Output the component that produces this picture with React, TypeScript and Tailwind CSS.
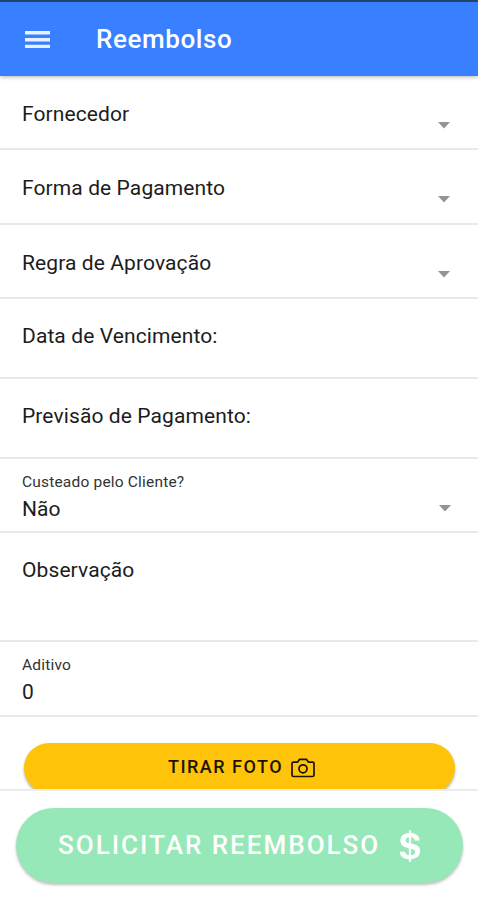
import React from "react";
import { IoLogoUsd } from "react-icons/io5";

interface FieldProps {
  label: string;
  value?: string;
  select?: boolean;
  className: string;
}

function Caret({ className }: { className: string }) {
  return (
    <svg viewBox="0 0 12 7" className={`h-[7px] w-3 fill-[#949494] ${className}`}>
      <path d="M0 0h12L6 6.6z" />
    </svg>
  );
}

function CameraIcon({ className }: { className: string }) {
  return (
    <svg viewBox="0 0 24 20" fill="none" stroke="currentColor" strokeWidth="1.7" strokeLinejoin="round" className={className}>
      <path d="M2.4 4.2h4.1l2.1-2.9h6.8l2.1 2.9h4.1a1.4 1.4 0 0 1 1.4 1.4v11.5a1.4 1.4 0 0 1-1.4 1.4H2.4A1.4 1.4 0 0 1 1 17.1V5.6a1.4 1.4 0 0 1 1.4-1.4z" />
      <circle cx="12" cy="10.8" r="4" />
    </svg>
  );
}

function Field({ label, value, select, className }: FieldProps) {
  return (
    <div className={`flex items-start justify-between border-b-2 border-[#e9e9e9] pl-[22px] ${className}`}>
      {value ? (
        <div className="pt-3.5">
          <div className="text-[15.5px] leading-[18px] tracking-[0.19px] text-[#333333]">{label}</div>
          <div className="mt-1.5 text-[21px] leading-6">{value}</div>
        </div>
      ) : (
        <div className="text-[21px] leading-6 tracking-[0.1px]">{label}</div>
      )}
      {select && <Caret className={value ? "mt-[46px] mr-[27px]" : "mt-5 mr-7"} />}
    </div>
  );
}

const fields: FieldProps[] = [
  { label: "Fornecedor", select: true, className: "h-[74px] pt-[26px]" },
  { label: "Forma de Pagamento", select: true, className: "h-[75px] pt-[26px]" },
  { label: "Regra de Aprovação", select: true, className: "h-[74px] pt-[26px]" },
  { label: "Data de Vencimento:", className: "h-20 pt-[25px]" },
  { label: "Previsão de Pagamento:", className: "h-20 pt-[25px]" },
  { label: "Custeado pelo Cliente?", value: "Não", select: true, className: "h-[74px]" },
  { label: "Observação", className: "h-[109px] pt-[25px]" },
  { label: "Aditivo", value: "0", className: "h-[75px]" },
];

export default function App() {
  return (
    <div className="flex h-[900px] w-[478px] flex-col overflow-hidden bg-white font-['Roboto',sans-serif] text-[#1c1c1c]">
      {/* Toolbar */}
      <header className="z-10 flex h-[76px] shrink-0 items-center border-t-2 border-[#24446f] bg-[#3880ff] pl-[25px] text-white shadow-[0_1px_4px_rgba(0,0,0,0.3)]">
        <svg viewBox="0 0 25 17" className="h-[17px] w-[25px] fill-[#e8f1ff]">
          <path d="M0 0h25v3.5H0zM0 7h25v3.5H0zM0 13.8h25V17H0z" />
        </svg>
        <h1 className="ml-[46px] text-[26px] leading-8 font-medium tracking-[0.6px]">Reembolso</h1>
      </header>

      {/* Form */}
      <main className="min-h-0 flex-1 overflow-hidden">
        {fields.map((field) => (
          <Field key={field.label} {...field} />
        ))}
        <button className="mt-[26px] ml-6 flex h-[50px] w-[431px] items-center justify-center rounded-full bg-[#ffc409] pb-1 pl-1 text-[18px] font-medium tracking-[1.5px] text-[#1a1500] shadow-[0_2px_3px_rgba(0,0,0,0.3)]">
          TIRAR FOTO
          <CameraIcon className="mt-1 ml-2 h-5 w-6" />
        </button>
      </main>

      {/* Footer */}
      <footer className="z-10 h-[111px] shrink-0 border-t-2 border-[#ececec] bg-white pt-[17px] pl-4">
        <button className="flex h-[75px] w-[447px] items-center rounded-full bg-[#96e8b8] pl-[42px] text-[26px] font-medium tracking-[2px] text-white shadow-[0_2px_3px_rgba(0,0,0,0.25)]">
          SOLICITAR REEMBOLSO
          <IoLogoUsd className="ml-3 size-9" />
        </button>
      </footer>
    </div>
  );
}
